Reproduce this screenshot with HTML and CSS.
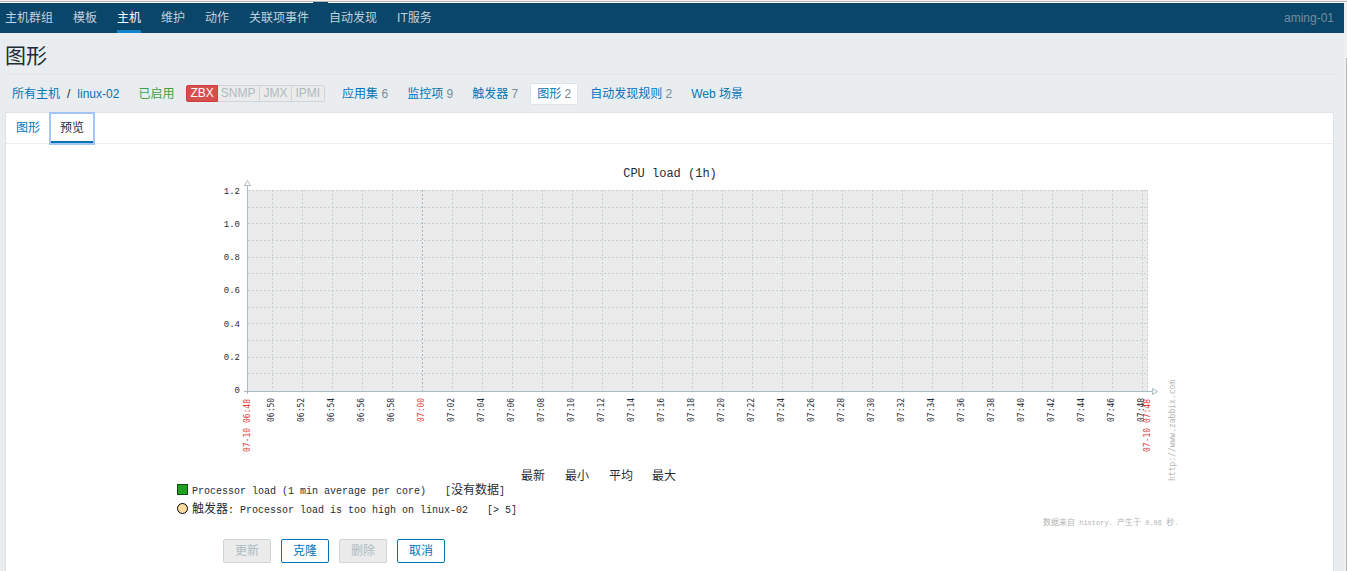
FILE: index.html
```html
<!DOCTYPE html>
<html lang="zh-CN">
<head>
<meta charset="utf-8">
<title>图形</title>
<link rel="stylesheet" href="styles.css">
</head>
<body>
<div class="window-edge"><span class="menu-notch"></span></div>
<div class="frame">
  <div class="page">
    <nav class="topnav">
      <ul class="menu">
        <li><a href="#">主机群组</a></li>
        <li><a href="#">模板</a></li>
        <li><a href="#" class="selected">主机</a></li>
        <li><a href="#">维护</a></li>
        <li><a href="#">动作</a></li>
        <li><a href="#">关联项事件</a></li>
        <li><a href="#">自动发现</a></li>
        <li><a href="#">IT服务</a></li>
      </ul>
      <span class="server">aming-01</span>
    </nav>
    <main class="content">
      <h1>图形</h1>
      <div class="hostbar">
        <div class="crumbs"><a href="#">所有主机</a><span>/</span><a href="#">linux-02</a></div>
        <span class="enabled">已启用</span>
        <div class="badges"><span class="on">ZBX</span><span>SNMP</span><span>JMX</span><span>IPMI</span></div>
        <ul class="objects">
          <li><a href="#">应用集</a> 6</li>
          <li><a href="#">监控项</a> 9</li>
          <li><a href="#">触发器</a> 7</li>
          <li class="current"><a href="#">图形</a> 2</li>
          <li><a href="#">自动发现规则</a> 2</li>
          <li><a href="#">Web 场景</a></li>
        </ul>
      </div>
      <section class="panel">
        <div class="tabs"><a href="#">图形</a><a href="#" class="active">预览</a></div>
        <svg class="graph" viewBox="159 153 1021 375" width="1021" height="375" role="img" aria-label="CPU load (1h)">
          <text class="title" x="670" y="177">CPU load (1h)</text>
          <rect class="plot" x="248" y="190" width="900" height="201"/>
          <path id="grid" class="grid"/>
          <path class="grid" d="M1147.5 190V391"/>
          <path class="hour" d="M422.5 190V391"/>
          <path class="axis" d="M247.5 186V394M244 391.5H1152M244.5 185.5H250.5L247.5 180.5ZM1152.5 388.5V394.5L1157.5 391.5Z"/>
          <g id="ylabels" class="ylabel"></g>
          <g id="xlabels" class="xlabel"></g>
          <text class="site" transform="translate(1175 481) rotate(-90)">http://www.zabbix.com</text>
          <g class="cjk">
            <text x="521" y="480">最新</text><text x="565" y="480">最小</text><text x="609" y="480">平均</text><text x="652" y="480">最大</text>
          </g>
          <rect class="item" x="177.500" y="484.500" width="10" height="10"/>
          <circle class="trigger" cx="182.500" cy="508.500" r="5"/>
          <g class="legend">
            <text x="192" y="494">Processor load (1 min average per core)</text>
            <text x="445" y="494">[<tspan class="cjk">没有数据</tspan>]</text>
            <text x="192" y="513"><tspan class="cjk">触发器</tspan>: Processor load is too high on linux-02</text>
            <text x="487" y="513">[&gt; 5]</text>
          </g>
          <text class="footnote" x="1043" y="525"><tspan class="small">数据来自</tspan> history. <tspan class="small">产生于</tspan> 0.06 <tspan class="small">秒</tspan>.</text>
        </svg>
        <div class="actions">
          <button type="button" disabled>更新</button>
          <button type="button">克隆</button>
          <button type="button" disabled>删除</button>
          <button type="button">取消</button>
        </div>
      </section>
    </main>
  </div>
  <div class="scroll-track"></div>
</div>
<script src="graph.js"></script>
</body>
</html>
```
FILE: graph.js
```js
const NS = 'http://www.w3.org/2000/svg';
const xg = document.getElementById('xlabels');
const yg = document.getElementById('ylabels');
function label(parent, text, attrs) {
  const t = document.createElementNS(NS, 'text');
  t.textContent = text;
  for (const k in attrs) t.setAttribute(k, attrs[k]);
  parent.appendChild(t);
}
let grid = '';
// Horizontal lines every half step of 0.2
for (let i = 0; i < 12; i++) grid += `M248 ${Math.round(190 + i * 16.67) + 0.5}H1148`;
// Vertical lines every two minutes, 06:50 to 07:48
for (let i = 0; i < 30; i++) {
  const x = 272 + i * 30;
  const min = 410 + i * 2;
  const text = '0' + Math.floor(min / 60) + ':' + String(min % 60).padStart(2, '0');
  if (min !== 420) grid += `M${x + 0.5} 190V391`;
  label(xg, text, {
    transform: `translate(${x + 2} 422) rotate(-90)`,
    class: min === 420 ? 'red' : ''
  });
}
label(xg, '07-10 06:48', { transform: 'translate(250 452) rotate(-90)', class: 'red' });
label(xg, '07-10 07:48', { transform: 'translate(1150 452) rotate(-90)', class: 'red' });
document.getElementById('grid').setAttribute('d', grid);
['1.2', '1.0', '0.8', '0.6', '0.4', '0.2', '0'].forEach((v, i) =>
  label(yg, v, { x: 240, y: Math.floor(194 + i * 33.3) }));
```
FILE: styles.css
```css
* { box-sizing: border-box; }
body {
  margin: 0;
  min-height: 100vh;
  display: flex;
  flex-direction: column;
  background: #e9edf0;
  color: #1f2c33;
  font: 12px/16px "Liberation Sans", "Noto Sans CJK SC", sans-serif;
}
a { color: #0275b8; text-decoration: none; }
ul { list-style: none; margin: 0; padding: 0; }

.window-edge {
  position: relative;
  height: 3px;
  background: linear-gradient(#f0f0f0 1px, #b4b4b4 1px 2px, #fff 2px);
}
.menu-notch {
  position: absolute;
  left: 313px;
  top: 2px;
  width: 15px;
  height: 1px;
  background: #0a466a;
}
.frame { flex: 1; display: flex; }
.page { flex: 1; display: flex; flex-direction: column; }
.scroll-track {
  width: 3px;
  background: linear-gradient(#f0f0f0 55px, transparent 55px), linear-gradient(90deg, #f0f0f0 2px, #b9b9b9 2px);
}

.topnav {
  height: 30px;
  padding: 0 10px 0 5px;
  display: flex;
  align-items: center;
  justify-content: space-between;
  background: #0a466a;
}
.menu { display: flex; gap: 20px; }
.menu a {
  display: block;
  height: 30px;
  line-height: 30px;
  color: #c3d1da;
}
.menu .selected { color: #fff; border-bottom: 3px solid #1285cc; }
.server { color: #768d99; }

.content { flex: 1; display: flex; flex-direction: column; padding: 0 10px 0 5px; }
h1 {
  margin: 0;
  height: 42px;
  line-height: 45px;
  font-size: 21px;
  font-weight: 400;
  border-bottom: 1px solid #dfe4e7;
}
.hostbar { display: flex; align-items: center; height: 37px; padding-left: 7px; }
.crumbs { display: flex; gap: 7px; }
.enabled { margin-left: 19px; color: #429e47; }
.badges { display: flex; margin-left: 12px; }
.badges span {
  height: 17px;
  line-height: 15px;
  padding: 0 4px 0 3px;
  border: 1px solid #ccd5d9;
  border-left-width: 0;
  background: #ebebeb;
  color: #acbbc2;
}
.badges .on { padding: 0 3px; background: #d64e4e; border-color: #d23d3d; border-left-width: 1px; color: #fff; border-radius: 2px 0 0 2px; }
.badges span:last-child { border-radius: 0 2px 2px 0; }
.objects { display: flex; gap: 5px; margin-left: 10px; color: #768d99; }
.objects li { height: 22px; line-height: 20px; padding: 0 6px; border: 1px solid transparent; border-radius: 2px; }
.objects .current { background: #fff; border-color: #dfe4e7; }

.panel {
  flex: 1;
  background: #fff;
  border: 1px solid #dfe4e7;
  border-bottom: 0;
}
.tabs { display: flex; height: 31px; border-bottom: 1px solid #ebeef0; }
.tabs a { height: 31px; line-height: 30px; padding: 0 10px; }
.tabs .active {
  color: #1f2c33;
  border-bottom: 3px solid #0275b8;
  outline: 2px solid #a3c4f9;
  outline-offset: -1px;
}
.graph { display: block; margin: 9px auto 0; }
.graph text { font-family: "Liberation Mono", "Noto Sans CJK SC", monospace; fill: #1f2c33; white-space: pre; }
.graph .title { font-size: 12px; text-anchor: middle; }
.graph .plot { fill: #ebebeb; }
.graph .grid { fill: none; stroke: #c3d0d6; stroke-dasharray: 2 2; }
.graph .hour { stroke: #a5b6be; stroke-dasharray: 2 2; }
.graph .axis { fill: #fff; stroke: #acbbc2; }
.graph .ylabel text { font-size: 9px; text-anchor: end; }
.graph .xlabel text, .graph .site { font-family: "DejaVu Sans Mono", monospace; font-size: 8px; }
.graph .xlabel .red { fill: #e33734; }
.graph .site { fill: #b4b4b4; }
.graph .legend text { font-size: 10px; }
.graph .cjk text, .graph .legend .cjk { font-size: 12px; }
.graph .item { fill: #1fa11f; stroke: #0a500a; }
.graph .trigger { fill: #ffdb9d; stroke: #000; }
.graph .footnote { font-size: 7px; fill: #b4b4b4; }
.graph .footnote .small { font-size: 8px; }

.actions { display: flex; gap: 10px; padding: 11px 0 8px 217px; }
.actions button {
  width: 48px;
  height: 24px;
  padding: 0;
  font: inherit;
  color: #0275b8;
  background: #fff;
  border: 1px solid #0275b8;
  border-radius: 2px;
}
.actions button:disabled { color: #acbbc2; background: #ebebeb; border-color: #ccd5d9; }
```
